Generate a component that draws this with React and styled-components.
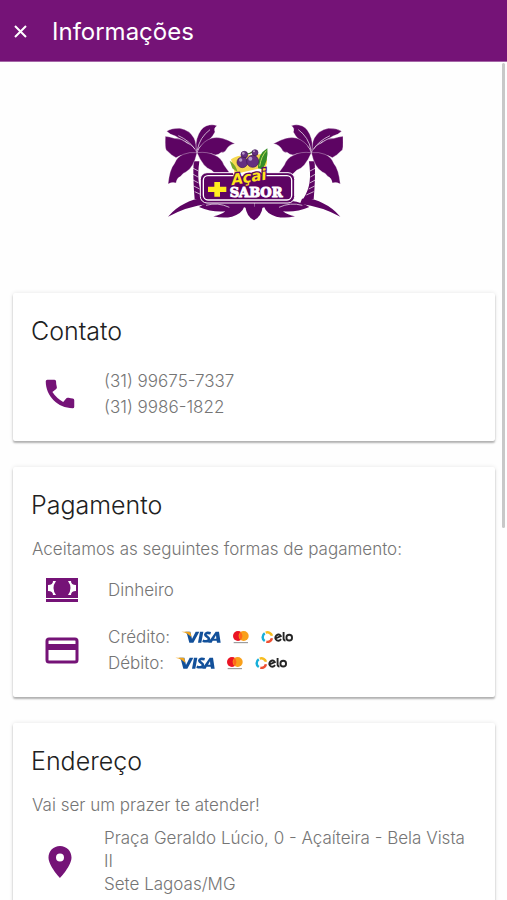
import React from "react";
import styled, { createGlobalStyle } from "styled-components";

const PURPLE = "#751377";
const LOGO_PURPLE = "#5d0463";

const GlobalStyle = createGlobalStyle`
  * { box-sizing: border-box; }
  body { margin: 0; background: #fefefe; }
  button, a { font: inherit; color: inherit; }
`;

const Screen = styled.div`
  position: relative;
  display: flex;
  flex-direction: column;
  height: 100vh;
  font-family: Inter, "Liberation Sans", sans-serif;
  font-weight: 300;
  color: #757575;
`;

const TopBar = styled.header`
  display: flex;
  align-items: center;
  flex: none;
  gap: 20px;
  height: 62px;
  padding: 0 8px;
  background: ${PURPLE};
  border-bottom: 1px solid #a566a7;
  color: #fff;
`;

const CloseButton = styled.button`
  display: flex;
  padding: 4px;
  border: 0;
  background: none;
  cursor: pointer;
`;

const PageTitle = styled.h1`
  margin: 0;
  padding-top: 2px;
  font-size: 24px;
  line-height: 32px;
  font-weight: 400;
`;

const Content = styled.main`
  flex: 1;
  min-height: 0;
  overflow-y: auto;
  scrollbar-width: none;
  padding: 62px 12px 24px 13px;
`;

const ScrollThumb = styled.div`
  position: absolute;
  top: 63px;
  right: 2px;
  width: 3px;
  height: calc((100% - 62px) * 0.555);
  border-radius: 2px;
  background: #c8c8c8;
`;

const LogoArea = styled.div`
  display: flex;
  justify-content: center;
  margin-bottom: 71px;
  svg { display: block; }
`;

const Card = styled.section`
  margin-bottom: 26px;
  padding: 21px 18px;
  border-radius: 2px;
  background: #fff;
  box-shadow: 0 2px 2px rgba(0, 0, 0, 0.28), 0 0 4px rgba(0, 0, 0, 0.1);
`;

const CardTitle = styled.h2`
  margin: 0;
  font-size: 25px;
  line-height: 34px;
  font-weight: 300;
  color: #212121;
`;

const Lead = styled.p`
  margin: 15px 0 0;
  padding-left: 1px;
  font-size: 17px;
  line-height: 24px;
`;

const InfoRow = styled.div`
  display: grid;
  grid-template-columns: 60px 1fr;
  align-items: center;
  column-gap: ${(p) => (p.$wide ? "17px" : "13px")};
  margin-top: ${(p) => p.$top}px;
  svg { display: block; }
`;

const IconCell = styled.div`
  display: flex;
  padding-left: ${(p) => p.$inset || 14}px;
`;

const Lines = styled.div`
  font-size: 17px;
  line-height: 26px;
`;

const Phone = styled.a`
  display: block;
  text-decoration: none;
`;

const Brands = styled.div`
  display: flex;
  align-items: center;
  gap: 11px;
`;

const Address = styled.address`
  font-style: normal;
  font-size: 17px;
  line-height: 23px;
`;

const PalmTree = () => (
  <g fill={LOGO_PURPLE}>
    <path d="M101 130H118Q113 168 116 190Q119 218 136 244H104Q98 180 101 130Z" />
    <path d="M98 150l17 9M98 168l16 9M99 186l17 9M101 204l18 9M104 221l22 10" stroke="#fff" strokeWidth="2" />
    <g stroke="#fff" strokeWidth="1">
      <path d="M20 40Q34 30 60 31Q88 36 102 60Q110 76 110 104Q95 78 70 67Q58 62 46 54Q31 51 20 40Z" />
      <path d="M171 23Q160 30 165 42Q153 66 128 79Q115 89 111 104Q103 76 116 48Q127 24 148 21Q160 19 171 23Z" />
      <path d="M16 55Q29 56 43 61Q64 60 81 75Q103 84 111 105Q98 121 79 113Q63 109 48 119Q35 113 21 98Q14 99 16 55Z" />
      <path d="M225 77Q208 79 200 93Q195 105 184 103Q169 116 154 107Q134 115 111 105Q119 79 144 65Q162 55 187 61Q205 66 225 77Z" />
      <path d="M111 104Q89 101 70 109Q52 116 43 137Q29 153 24 198Q37 191 48 195Q50 180 62 175Q69 164 78 162Q101 149 111 104Z" />
      <path d="M111 104Q143 100 165 112Q183 119 192 141Q199 151 212 169Q195 165 180 174Q164 169 155 157Q129 148 111 104Z" />
    </g>
    <path d="M55 53Q88 68 105 94M150 35Q119 58 112 96" fill="none" stroke="#fff" strokeWidth="2" />
  </g>
);

const Ground = () => (
  <g fill={LOGO_PURPLE}>
    <path d="M24 296Q48 269 76 256Q104 239 139 242L145 257Q78 266 24 296Z" />
    <path d="M117 267Q139 253 170 249H282V286Q268 270 252 268Q246 287 216 296Q190 302 160 295Q183 291 196 280Q157 284 117 267Z" />
    <path d="M138 262Q174 252 208 268" fill="none" stroke="#fff" strokeWidth="2" />
  </g>
);

const Logo = () => (
  <svg width="178" height="98" viewBox="15 18 534 294" role="img" aria-label="Açaí + Sabor">
    <PalmTree />
    <g transform="translate(565 0) scale(-1 1)">
      <PalmTree />
      <Ground />
    </g>
    <Ground />
    <path d="M256 266Q260 296 282 307Q305 294 308 266Z" fill={LOGO_PURPLE} />
    <rect x="121" y="164" width="283" height="91" rx="20" fill={LOGO_PURPLE} stroke="#fff" strokeWidth="3" />
    <rect x="130" y="173" width="265" height="73" rx="14" fill={LOGO_PURPLE} stroke="#fff" strokeWidth="4" />
    <path d="M207 121Q229 123 237 105Q270 84 296 99L322 88Q327 129 311 165L222 178Z" fill="#fff" />
    <path d="M213 124Q231 112 242 113L309 108Q328 125 317 147L225 168Z" fill="#f6d84f" />
    <path d="M209 128Q228 140 233 163L217 151Z" fill="#78a92c" />
    <path d="M294 151Q292 108 322 91Q326 127 307 154Z" fill="#358d28" />
    <path d="M299 145Q303 116 319 98" fill="none" stroke="#bddb5a" strokeWidth="3" />
    <path d="M246 108Q263 113 282 99" fill="none" stroke="#497b27" strokeWidth="4" />
    <g fill="#653080" stroke="#3d1558" strokeWidth="2">
      <circle cx="253" cy="110" r="10" />
      <circle cx="285" cy="104" r="9" />
      <circle cx="247" cy="133" r="16" />
      <circle cx="278" cy="130" r="18" />
    </g>
    <g fill="#b69ac7">
      <circle cx="250" cy="106" r="4" />
      <circle cx="282" cy="100" r="3" />
      <circle cx="242" cy="126" r="5" />
      <circle cx="271" cy="122" r="6" />
    </g>
    <text x="217" y="201" transform="rotate(-9 217 201)" fontFamily="'DejaVu Sans', sans-serif" fontSize="45" fontWeight="700" fontStyle="italic" fill="#ffe71a" stroke={LOGO_PURPLE} strokeWidth="8" paintOrder="stroke">Açai</text>
    <path d="M163 192h17v14h19v16h-19v14h-17v-14h-19v-16h19z" fill="#ffed20" />
    <text x="209" y="236" fontFamily="'DejaVu Serif', serif" fontSize="39" fontWeight="700" fill="#fff" stroke="#fff" strokeWidth="3">SABOR</text>
  </svg>
);

const CloseIcon = () => (
  <svg width="16" height="16" viewBox="0 0 16 16" aria-hidden="true">
    <path d="M3 3L14 14M14 3L3 14" stroke="#fff" strokeWidth="2" />
  </svg>
);

const PhoneIcon = () => (
  <svg width="38" height="38" viewBox="0 0 24 24" fill={PURPLE} aria-hidden="true">
    <path d="M3 4Q3 3 4 3H8.5Q9.500 3 9.500 4Q9.500 6 10 7.500Q10.200 8.200 9.600 8.800L7.200 10.800Q10 15 14 17L16.200 14.600Q16.700 14.200 17.400 14.400Q19 14.900 20 14.900Q21 15 21 16V20Q21 21 20 21C10.610 21 3 13.390 3 4Z" />
  </svg>
);

const CashIcon = () => (
  <svg width="34" height="26" viewBox="0 0 34 26" fill={PURPLE} aria-hidden="true">
    <path d="M1 1h32v20H1zM1 22h32v3H1z" />
    <path d="M11 4H8Q8 8 3 8v6q5 0 5 4h3Q6 11 11 4zM23 4h3q0 4 5 4v6q-5 0-5 4h-3q5-7 0-14z" fill="#fff" />
  </svg>
);

const CardIcon = () => (
  <svg width="34" height="28" viewBox="0 0 34 28" aria-hidden="true">
    <rect x="2" y="3" width="30" height="23" rx="2" fill="none" stroke={PURPLE} strokeWidth="3" />
    <path d="M2 8h30v6H2z" fill={PURPLE} />
  </svg>
);

const PinIcon = () => (
  <svg width="24" height="34" viewBox="0 0 24 34" fill={PURPLE} aria-hidden="true">
    <path fillRule="evenodd" d="M12 1C5.500 1 0.500 6 0.500 12.500C0.500 21 12 33 12 33S23.500 21 23.500 12.500C23.500 6 18.500 1 12 1zM12 8.500a4 4 0 1 1 0 8a4 4 0 1 1 0-8z" />
  </svg>
);

const Visa = () => (
  <svg width="40" height="14" viewBox="0 0 120 42" role="img" aria-label="Visa">
    <path d="M13 5h15l5 22L44 5h11L37 38H25L18 12z" fill="#12509a" />
    <path d="M57 5h10l-6 33H51z" fill="#12509a" />
    <path d="M89 10Q74 6 73 14C73 20 85 20 84 28Q81 37 65 32" fill="none" stroke="#12509a" strokeWidth="8" />
    <path fillRule="evenodd" d="M104 5h10l5 33h-11l-1-6H95l-3 6H81zm1 11-6 10h7z" fill="#12509a" />
    <path d="M1 5h23q4 0 5 5l2 11Q20 8 1 5z" fill="#f2a51c" />
  </svg>
);

const Mastercard = () => (
  <svg width="18" height="14" viewBox="0 0 54 42" role="img" aria-label="Mastercard">
    <circle cx="18" cy="18" r="15" fill="#eb1424" />
    <circle cx="35" cy="18" r="15" fill="#f9a01b" />
    <path d="M26.500 6Q36 18 26.500 30Q17 18 26.500 6Z" fill="#ff681c" />
    <path d="M5 38h43" stroke="#8b8b8b" strokeWidth="3" />
  </svg>
);

const Elo = () => (
  <svg width="32" height="14" viewBox="0 0 102 42" role="img" aria-label="Elo">
    <g fill="none" strokeWidth="8">
      <path d="M12 9A15 15 0 0 0 12 34" stroke="#17afd9" />
      <path d="M15 7A15 15 0 0 1 35 17" stroke="#f7bd20" />
      <path d="M35 25A15 15 0 0 1 17 36" stroke="#ef5032" />
    </g>
    <g fill="none" stroke="#252525" strokeWidth="6">
      <path d="M48 25L63 18Q57 9 49 16Q41 26 51 32Q58 35 64 28M72 5V26Q72 32 78 32" />
      <ellipse cx="90" cy="23" rx="9" ry="9" />
    </g>
  </svg>
);

const BrandRow = ({ label }) => (
  <Brands>
    <span>{label}</span>
    <Visa />
    <Mastercard />
    <Elo />
  </Brands>
);

export default function App() {
  return (
    <Screen>
      <GlobalStyle />
      <TopBar>
        <CloseButton type="button" aria-label="Fechar"><CloseIcon /></CloseButton>
        <PageTitle>Informações</PageTitle>
      </TopBar>
      <Content>
        <LogoArea><Logo /></LogoArea>
        <Card>
          <CardTitle>Contato</CardTitle>
          <InfoRow $top={20}>
            <IconCell $inset={10}><PhoneIcon /></IconCell>
            <Lines>
              <Phone href="tel:+5531996757337">(31) 99675-7337</Phone>
              <Phone href="tel:+553199861822">(31) 9986-1822</Phone>
            </Lines>
          </InfoRow>
        </Card>
        <Card>
          <CardTitle>Pagamento</CardTitle>
          <Lead>Aceitamos as seguintes formas de pagamento:</Lead>
          <InfoRow $wide $top={16}>
            <IconCell><CashIcon /></IconCell>
            <Lines>Dinheiro</Lines>
          </InfoRow>
          <InfoRow $wide $top={21}>
            <IconCell><CardIcon /></IconCell>
            <Lines>
              <BrandRow label="Crédito:" />
              <BrandRow label="Débito:" />
            </Lines>
          </InfoRow>
        </Card>
        <Card>
          <CardTitle>Endereço</CardTitle>
          <Lead>Vai ser um prazer te atender!</Lead>
          <InfoRow $top={10}>
            <IconCell $inset={17}><PinIcon /></IconCell>
            <Address>
              Praça Geraldo Lúcio, 0 - Açaíteira - Bela Vista II
              <br />
              Sete Lagoas/MG
            </Address>
          </InfoRow>
        </Card>
      </Content>
      <ScrollThumb />
    </Screen>
  );
}
